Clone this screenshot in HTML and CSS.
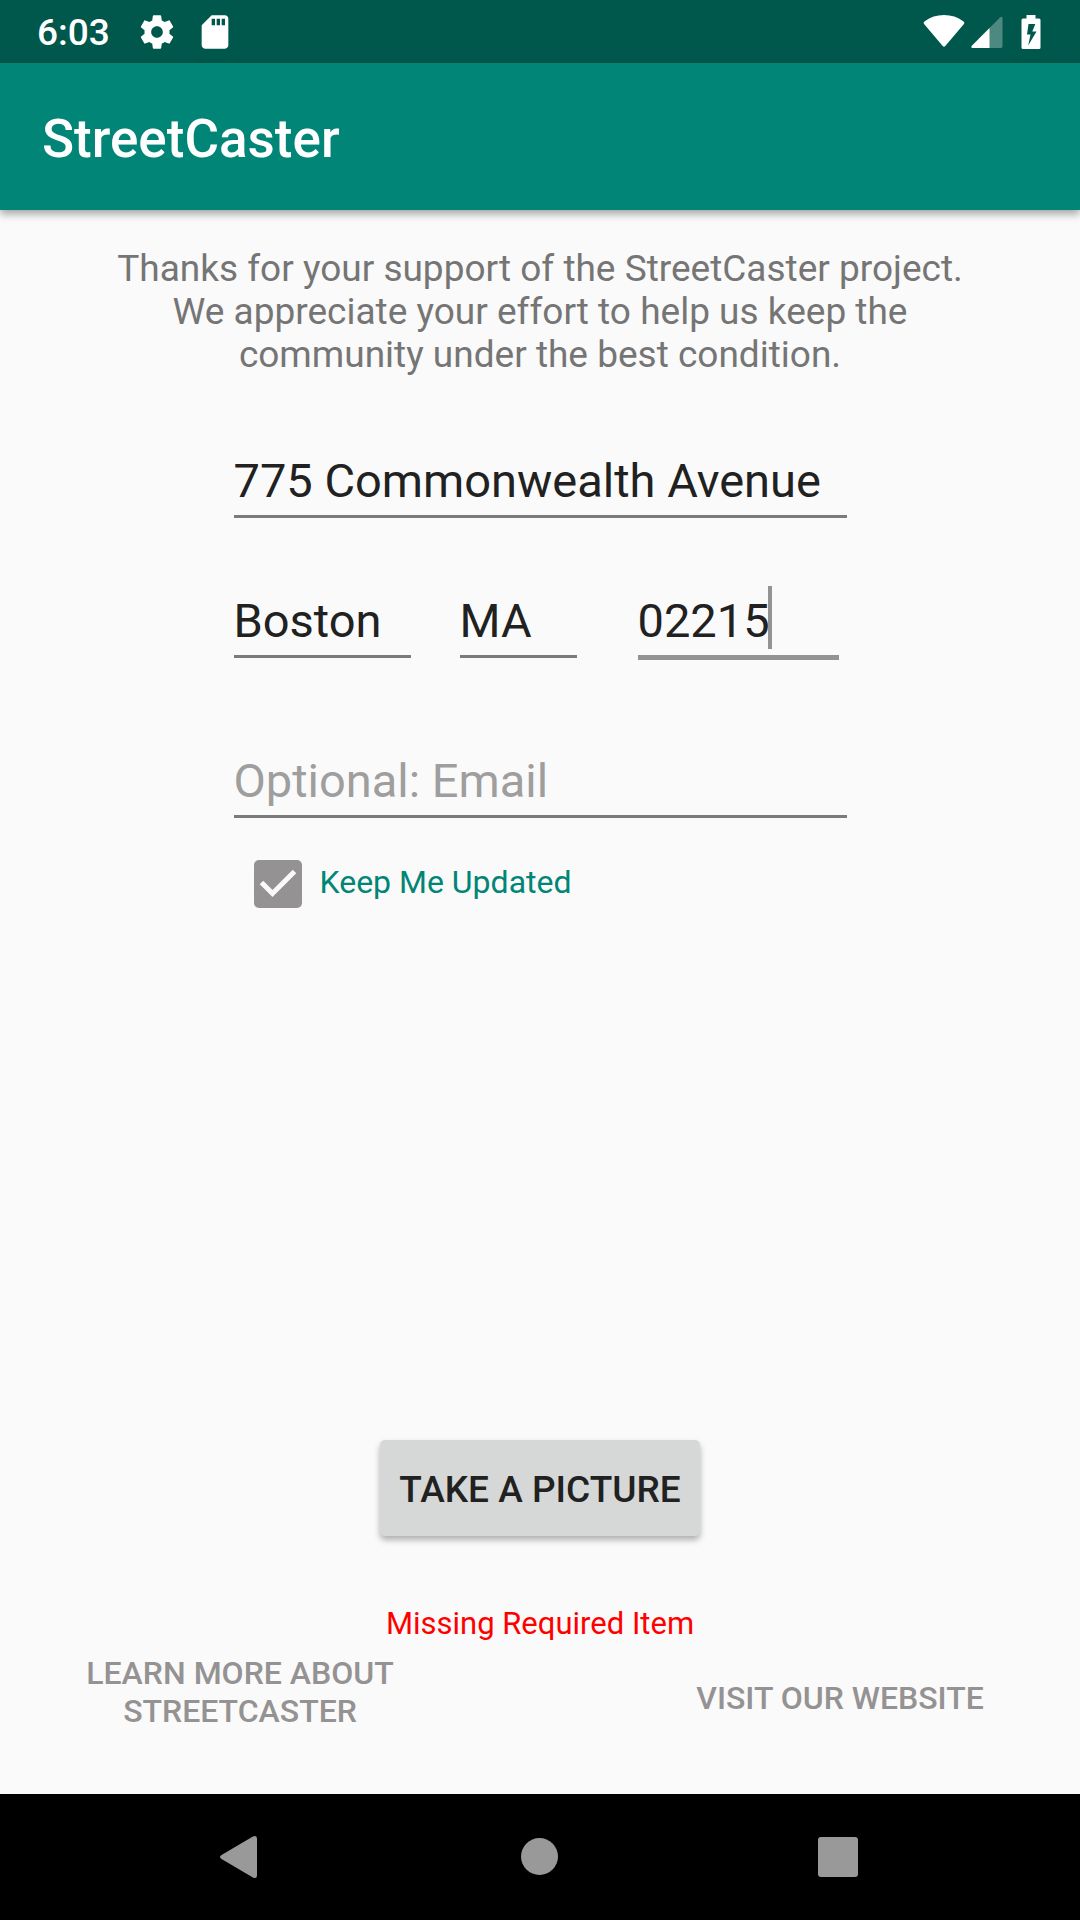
FILE: index.html
```html
<!DOCTYPE html>
<html lang="en">
<head>
<meta charset="utf-8">
<meta name="viewport" content="width=device-width, initial-scale=1">
<title>StreetCaster</title>
<link rel="stylesheet" href="styles.css">
</head>
<body>
<div class="status-bar">
  <div class="status-group">
    <span class="clock">6:03</span>
    <svg class="status-icon" viewBox="0 0 24 24" aria-hidden="true"><path d="M19.43 12.98c.04-.32.07-.64.07-.98s-.03-.66-.07-.98l2.11-1.65c.19-.15.24-.42.12-.64l-2-3.46c-.12-.22-.39-.3-.61-.22l-2.49 1c-.52-.4-1.08-.73-1.69-.98l-.38-2.65C14.46 2.18 14.25 2 14 2h-4c-.25 0-.46.18-.49.42l-.38 2.65c-.61.25-1.17.59-1.69.98l-2.49-1c-.23-.09-.49 0-.61.22l-2 3.46c-.13.22-.07.49.12.64l2.11 1.65c-.04.32-.07.65-.07.98s.03.66.07.98l-2.11 1.65c-.19.15-.24.42-.12.64l2 3.46c.12.22.39.3.61.22l2.49-1c.52.4 1.08.73 1.69.98l.38 2.65c.03.24.24.42.49.42h4c.25 0 .46-.18.49-.42l.38-2.65c.61-.25 1.17-.59 1.69-.98l2.49 1c.23.09.49 0 .61-.22l2-3.46c.12-.22.07-.49-.12-.64l-2.11-1.65zM12 15.5c-1.93 0-3.5-1.57-3.5-3.5s1.57-3.5 3.5-3.5 3.5 1.57 3.5 3.5-1.57 3.5-3.5 3.5z"/></svg>
    <svg class="status-icon" viewBox="0 0 24 24" aria-hidden="true"><path d="M18 2h-8L4.020 8 4 20c0 1.100.9 2 2 2h12c1.100 0 2-.9 2-2V4c0-1.100-.9-2-2-2zm-6 6h-2V4h2v4zm3 0h-2V4h2v4zm3 0h-2V4h2v4z"/></svg>
  </div>
  <div class="status-group status-group--system">
    <svg class="wifi-icon" viewBox="0 0 42 34" aria-hidden="true"><path d="M1.500 9.500Q-.3 7.700 1.800 6.300Q10 0 21 0T40.200 6.300Q42.300 7.700 40.500 9.500L22.300 31Q21 32.300 19.700 31Z"/></svg>
    <svg class="signal-icon" viewBox="0 0 32 34" aria-hidden="true"><path opacity=".3" d="M18 13.500 29 2.500Q31.500 .7 31.500 3V31Q31.500 33 30 33H18Z"/><path d="M18.500 13V33H1.500Q-.5 32.500 .8 30.800Z"/></svg>
    <svg class="battery-icon" viewBox="0 0 20 34" aria-hidden="true"><path fill-rule="evenodd" d="M5.500 0H14.500V3.500H18Q19.500 3.500 19.500 5V32.500Q19.500 34 18 34H2Q.5 34 .5 32.500V5Q.5 3.500 2 3.500H5.500ZM7.500 9 6 19.500H9.500L7.200 30.500 15.500 16.500H11.300L14.300 9Z"/></svg>
  </div>
</div>
<header class="app-bar"><h1 class="app-title">StreetCaster</h1></header>
<main class="content">
  <p class="intro">Thanks for your support of the StreetCaster project. We appreciate your effort to help us keep the community under the best condition.</p>
  <form class="report">
    <input class="field" type="text" aria-label="Street address" value="775 Commonwealth Avenue">
    <div class="locality">
      <div class="cell cell--city"><input class="field" type="text" aria-label="City" value="Boston"></div>
      <div class="cell cell--state"><input class="field" type="text" aria-label="State" value="MA"></div>
      <div class="cell cell--zip"><input class="field field--active" type="text" aria-label="ZIP code" value="02215"><span class="caret"></span></div>
    </div>
    <input class="field" type="email" aria-label="Email" placeholder="Optional: Email">
    <div class="updates">
      <span class="tick">
        <input class="tick-box" type="checkbox" id="updates" checked>
        <svg class="tick-mark" viewBox="0 0 48 48" aria-hidden="true"><path d="M7.500 22.500 18.500 33.500 40.500 11.500"/></svg>
      </span>
      <label class="updates-label" for="updates">Keep Me Updated</label>
    </div>
  </form>
  <div class="actions">
    <button class="capture" type="button">TAKE A PICTURE</button>
    <p class="error" role="alert">Missing Required Item</p>
    <div class="links">
      <a class="link" href="#about">LEARN MORE ABOUT STREETCASTER</a>
      <a class="link link--site" href="#website">VISIT OUR WEBSITE</a>
    </div>
  </div>
</main>
<nav class="nav-bar" aria-label="System">
  <button class="nav-button" type="button" aria-label="Back"><svg class="nav-icon" viewBox="0 0 64 64"><path d="M44.500 11.800Q48.800 9.500 49 13.500V50.500Q48.800 54.500 44.500 52.200L13.500 34Q10.500 32 13.500 30Z"/></svg></button>
  <button class="nav-button" type="button" aria-label="Home"><svg class="nav-icon" viewBox="0 0 64 64"><circle cx="31.500" cy="31.500" r="18.500"/></svg></button>
  <button class="nav-button" type="button" aria-label="Overview"><svg class="nav-icon" viewBox="0 0 64 64"><rect x="10" y="12" width="40" height="40" rx="3"/></svg></button>
</nav>
</body>
</html>
```
FILE: styles.css
```css
* { box-sizing: border-box; }

body {
  display: flex;
  flex-direction: column;
  min-height: 100vh;
  margin: 0;
  background: #fafafa;
  color: #212121;
  font-family: Roboto, "Liberation Sans", sans-serif;
}

button { border: 0; font-family: inherit; }

.status-bar {
  display: flex;
  justify-content: space-between;
  align-items: center;
  height: 63px;
  padding: 0 39px 0 37px;
  background: #00574b;
  color: #fff;
}

.status-group { display: flex; align-items: center; gap: 18px; }
.status-group--system { gap: 6px; }
.status-group svg { fill: #fff; }

.clock {
  margin-right: 9px;
  padding-top: 2px;
  font-size: 37px;
  line-height: 43px;
  font-weight: 500;
}

.status-icon { width: 40px; height: 40px; }
.wifi-icon { width: 42px; height: 34px; }
.signal-icon { width: 32px; height: 34px; }
.battery-icon { width: 20px; height: 34px; margin-left: 12px; }

.app-bar {
  display: flex;
  align-items: center;
  padding: 46px 42px 40px;
  background: #008577;
  color: #fff;
  box-shadow: 0 4px 8px rgba(0, 0, 0, 0.35);
}

.app-title {
  margin: 0;
  font-size: 53px;
  line-height: 61px;
  font-weight: 500;
}

.content {
  display: flex;
  flex: 1;
  flex-direction: column;
  align-items: center;
  padding: 37px 0 64px;
}

.intro {
  max-width: 880px;
  margin: 0 0 77px;
  color: #757575;
  font-size: 37px;
  line-height: 43px;
  text-align: center;
}

.report { width: 100%; max-width: 613px; }

.field {
  display: block;
  width: 100%;
  height: 65px;
  padding: 0 0 7px;
  border: 0;
  border-bottom: 3px solid #7b7b7b;
  border-radius: 0;
  outline: 0;
  background: transparent;
  color: #212121;
  font-family: inherit;
  font-size: 47px;
  line-height: 55px;
}

.field::placeholder { color: #9e9e9e; opacity: 1; }
.field--active { height: 67px; border-bottom: 5px solid #949292; }

.locality {
  display: grid;
  grid-template-columns: 226fr 178fr 209fr;
  margin: 75px 0 93px;
}

.cell { position: relative; }
.cell--city { padding-right: 49px; }
.cell--state { padding-right: 61px; }
.cell--zip { padding-right: 8px; }

.caret {
  position: absolute;
  top: -7px;
  left: 130px;
  width: 4px;
  height: 63px;
  background: #949292;
}

.updates {
  display: flex;
  align-items: center;
  gap: 18px;
  margin-top: 42px;
  padding-left: 20px;
}

.tick { position: relative; width: 48px; height: 48px; }

.tick-box {
  appearance: none;
  display: block;
  width: 48px;
  height: 48px;
  margin: 0;
  border-radius: 5px;
  background: #949292;
}

.tick-mark {
  position: absolute;
  inset: 0;
  fill: none;
  stroke: #fafafa;
  stroke-width: 5;
  pointer-events: none;
}

.updates-label {
  padding-bottom: 4px;
  color: #008577;
  font-size: 32px;
  line-height: 38px;
}

.actions {
  display: flex;
  flex-direction: column;
  align-items: center;
  width: 100%;
  margin-top: auto;
}

.capture {
  padding: 28px 19px 25px;
  border-radius: 5px;
  background: #d6d8d7;
  color: #212121;
  font-size: 37px;
  line-height: 43px;
  font-weight: 500;
  box-shadow: 0 4px 6px rgba(0, 0, 0, 0.3);
}

.error {
  margin: 69px 0 11px;
  color: #f00;
  font-size: 31px;
  line-height: 38px;
}

.links {
  display: flex;
  justify-content: space-between;
  align-items: flex-end;
  width: 100%;
  padding: 0 80px;
}

.link {
  width: 320px;
  color: #949292;
  font-size: 32px;
  line-height: 38px;
  font-weight: 500;
  text-align: center;
  text-decoration: none;
}

.link--site { padding-bottom: 13px; }

.nav-bar {
  display: flex;
  justify-content: space-between;
  padding: 31px 208px;
  background: #000;
}

.nav-button { padding: 0; background: transparent; }
.nav-icon { display: block; width: 64px; height: 64px; fill: #999; }
```
